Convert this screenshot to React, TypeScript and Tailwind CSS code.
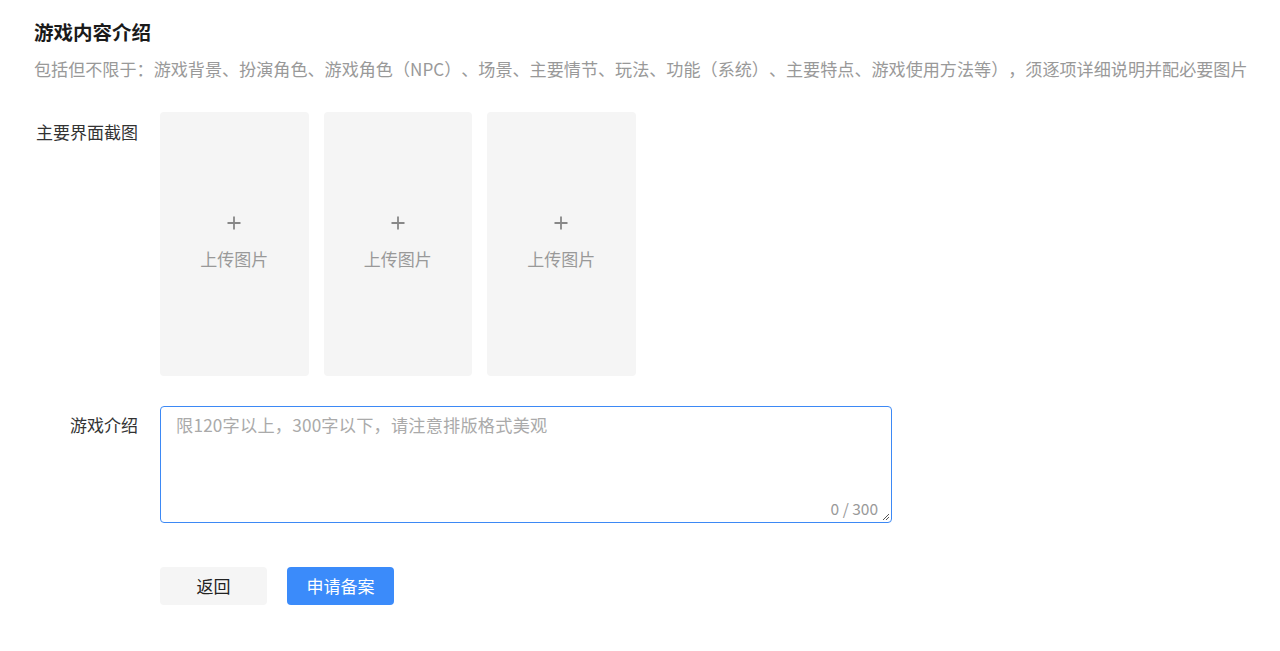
import React from "react";

const font = { fontFamily: '"PingFang SC","Noto Sans CJK SC","Noto Sans",sans-serif' };

function UploadBox() {
  return (
    <div className="w-[148.5px] h-[264px] rounded-[4px] bg-[#f5f5f5] flex flex-col items-center justify-center">
      <svg width="14" height="14" viewBox="0 0 14 14" className="mt-[-1px]">
        <path d="M7 0.5v13M0.5 7h13" stroke="#888" strokeWidth="1.8" />
      </svg>
      <div className="mt-[17px] text-[17px] leading-[24px] text-[#999]">上传图片</div>
    </div>
  );
}

export default function App() {
  return (
    <div className="min-h-[651px] bg-white pl-[34px] pt-[19px] [text-spacing-trim:space-all]" style={font}>
      <div className="text-[19.5px] leading-[26px] font-semibold text-[#1a1a1a]">游戏内容介绍</div>
      <div className="mt-[12px] text-[17.1px] leading-[24px] text-[#999] whitespace-nowrap">
        包括但不限于：游戏背景、扮演角色、游戏角色（NPC）、场景、主要情节、玩法、功能（系统）、主要特点、游戏使用方法等），须逐项详细说明并配必要图片
      </div>

      <div className="mt-[31px] flex">
        <div className="w-[104px] text-right text-[17px] leading-[24px] text-[#333] pt-[8px]">主要界面截图</div>
        <div className="ml-[22px] flex gap-[15px]">
          <UploadBox />
          <UploadBox />
          <UploadBox />
        </div>
      </div>

      <div className="mt-[30px] flex">
        <div className="w-[104px] text-right text-[17px] leading-[24px] text-[#333] pt-[7px]">游戏介绍</div>
        <div className="ml-[22px] relative w-[732px] h-[117px] rounded-[4px] border border-[#3d89f5] bg-white">
          <div className="pl-[15px] pt-[6px] text-[17.2px] leading-[24px] tracking-[0.2px] text-[#aaa]">限120字以上，300字以下，请注意排版格式美观</div>
          <div className="absolute right-[13px] bottom-[5px] text-[15.5px] leading-[18px] text-[#999]">0 / 300</div>
          <svg width="8" height="8" viewBox="0 0 8 8" className="absolute right-[1px] bottom-[1px]">
            <path d="M7 1L1 7M7 4L4 7" stroke="#555" strokeWidth="1" />
          </svg>
        </div>
      </div>

      <div className="mt-[44px] ml-[126px] flex gap-[20px]">
        <button className="w-[107px] h-[38px] rounded-[4px] bg-[#f5f5f5] text-[17px] text-[#222]">返回</button>
        <button className="w-[107px] h-[38px] rounded-[4px] bg-[#3b8bfa] text-[17px] text-white">申请备案</button>
      </div>
    </div>
  );
}
